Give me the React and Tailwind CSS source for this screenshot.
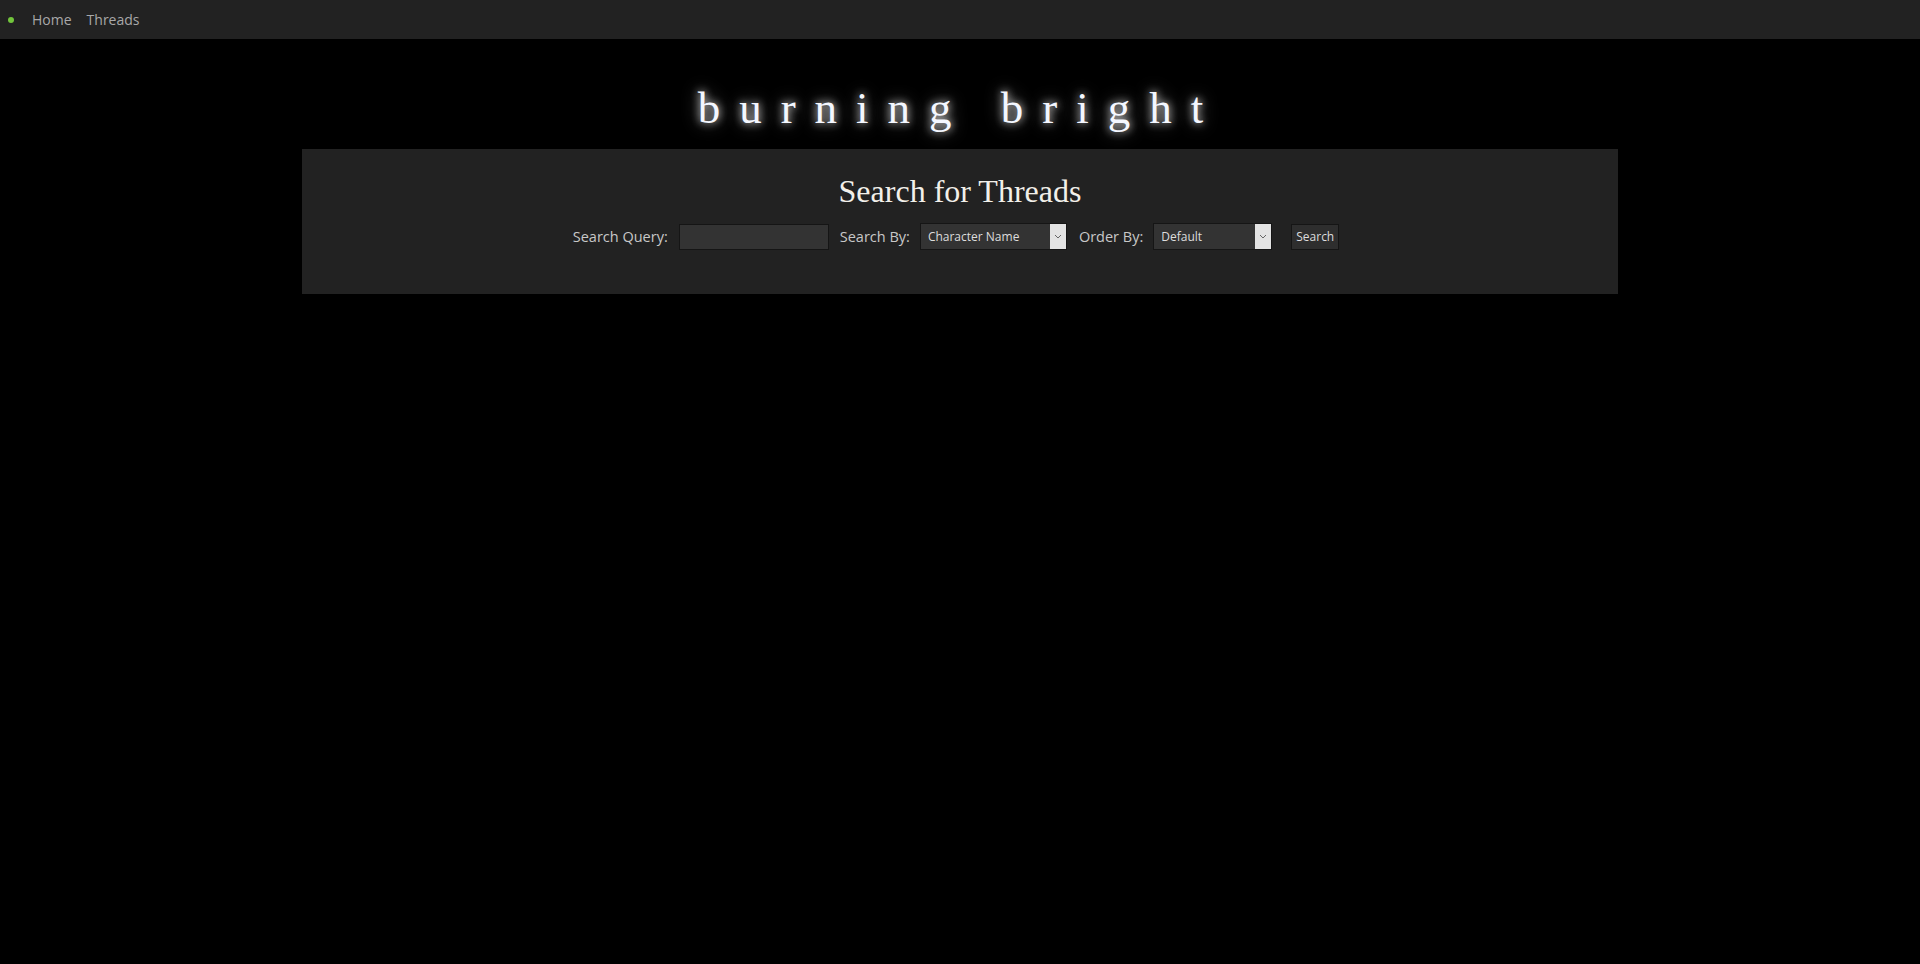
import React from 'react';

function Chevron() {
  return (
    <svg width="8" height="5" viewBox="0 0 8 5" fill="none">
      <path d="M1 1l3 3 3-3" stroke="#666" strokeWidth="1" />
    </svg>
  );
}

function FakeSelect({ value, width }) {
  return (
    <div className={`flex h-[27px] items-stretch border border-[#151515] bg-[#333] ${width}`}>
      <span className="flex flex-1 items-center pl-[7px] text-[12px] text-[#ddd]">{value}</span>
      <span className="flex w-[16px] items-center justify-center bg-[#e3e3e3]">
        <Chevron />
      </span>
    </div>
  );
}

export default function App() {
  return (
    <div className="min-h-screen bg-black font-['Open_Sans',sans-serif]">
      {/* top nav */}
      <nav className="flex h-[39px] items-center bg-[#222] pl-[8px] text-[14px] text-[#a8a8a8]">
        <span className="h-[6px] w-[6px] rounded-full bg-[#72c53c]"></span>
        <a className="ml-[18px]">Home</a>
        <a className="ml-[15px]">Threads</a>
      </nav>

      {/* site title */}
      <h1 className="pt-[43px] pb-[15px] text-center font-['Liberation_Serif',serif] text-[45px] leading-[52px] tracking-[19px] text-[#f4f7ff] [text-shadow:0_0_8px_rgba(255,255,255,0.9),0_0_18px_rgba(255,255,255,0.45)]">
        burning bright
      </h1>

      {/* search panel */}
      <div className="mx-auto w-[1316px] bg-[#222] pt-[24px] pb-[44px]">
        <h2 className="text-center font-['Liberation_Serif',serif] text-[32px] leading-[37px] text-[#f2f0ea]">
          Search for Threads
        </h2>
        <div className="mt-[13px] flex items-center justify-center pr-[8px] text-[14.5px] text-[#c8c8c8]">
          <label>Search Query:</label>
          <input className="ml-[11px] h-[26px] w-[150px] border border-[#151515] bg-[#333] outline-none" />
          <label className="ml-[11px]">Search By:</label>
          <div className="ml-[10px]">
            <FakeSelect value="Character Name" width="w-[147px]" />
          </div>
          <label className="ml-[12px]">Order By:</label>
          <div className="ml-[10px]">
            <FakeSelect value="Default" width="w-[119px]" />
          </div>
          <button className="ml-[19px] h-[26px] border border-[#151515] bg-[#2e2e2e] px-[4px] text-[12px] text-[#ddd]">
            Search
          </button>
        </div>
      </div>
    </div>
  );
}
